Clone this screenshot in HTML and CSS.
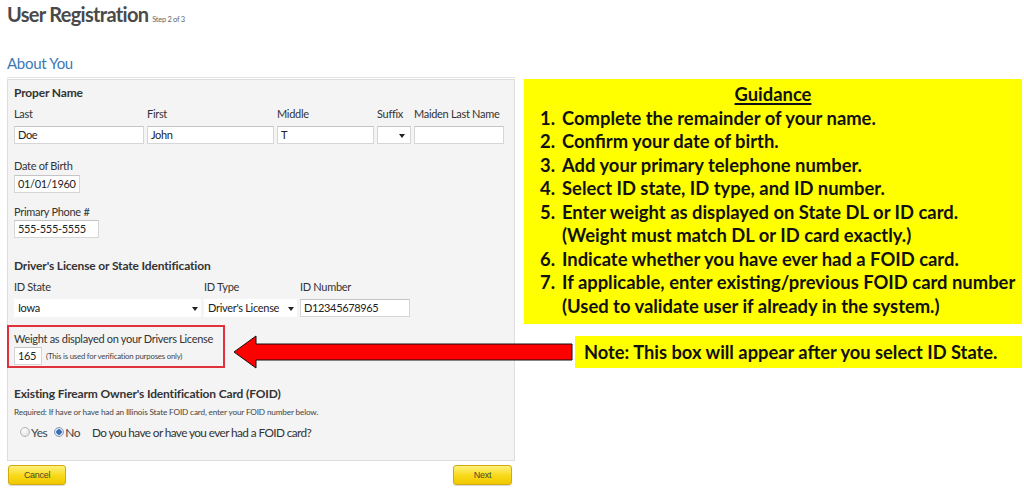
FILE: index.html
```html
<!DOCTYPE html>
<html>
<head>
<meta charset="utf-8">
<title>User Registration</title>
<link rel="stylesheet" href="styles.css">
</head>
<body>
<div class="page">
  <header class="title-bar">
    <h1 class="title">User Registration</h1>
    <span class="step">Step 2 of 3</span>
  </header>
  <h2 class="section">About You</h2>
  <div class="main">
    <div class="left">
      <div class="panel">
        <div class="group-title">Proper Name</div>
        <div class="name-grid">
          <label class="lbl">Last</label>
          <label class="lbl">First</label>
          <label class="lbl">Middle</label>
          <label class="lbl">Suffix</label>
          <label class="lbl">Maiden Last Name</label>
          <div class="input">Doe</div>
          <div class="input">John</div>
          <div class="input">T</div>
          <div class="input select-box"><span class="caret"></span></div>
          <div class="input"></div>
        </div>
        <div class="field dob">
          <label class="lbl">Date of Birth</label>
          <div class="input w-dob">01/01/1960</div>
        </div>
        <div class="field phone">
          <label class="lbl">Primary Phone #</label>
          <div class="input w-phone">555-555-5555</div>
        </div>
        <div class="group-title dl-title">Driver's License or State Identification</div>
        <div class="id-grid">
          <label class="lbl">ID State</label>
          <label class="lbl">ID Type</label>
          <label class="lbl">ID Number</label>
          <div class="select plain"><span class="sel-text">Iowa</span><span class="caret"></span></div>
          <div class="select plain"><span class="sel-text">Driver's License</span><span class="caret"></span></div>
          <div class="input">D12345678965</div>
        </div>
        <div class="weight-box">
          <div class="lbl weight-lbl">Weight as displayed on your Drivers License</div>
          <div class="weight-row">
            <div class="input w-weight">165</div>
            <span class="hint">(This is used for verification purposes only)</span>
          </div>
        </div>
        <div class="group-title foid-title">Existing Firearm Owner's Identification Card (FOID)</div>
        <div class="required">Required: If have or have had an Illinois State FOID card, enter your FOID number below.</div>
        <div class="radio-row">
          <span class="radio"></span><span class="radio-lbl">Yes</span>
          <span class="radio checked"></span><span class="radio-lbl">No</span>
          <span class="question">Do you have or have you ever had a FOID card?</span>
        </div>
      </div>
      <div class="buttons">
        <button class="btn btn-cancel">Cancel</button>
        <button class="btn btn-next">Next</button>
      </div>
    </div>
    <div class="right">
      <div class="guidance">
        <div class="g-title">Guidance</div>
        <ol class="g-list">
          <li><span class="num">1.</span><span class="txt">Complete the remainder of your name.</span></li>
          <li><span class="num">2.</span><span class="txt">Confirm your date of birth.</span></li>
          <li><span class="num">3.</span><span class="txt">Add your primary telephone number.</span></li>
          <li><span class="num">4.</span><span class="txt">Select ID state, ID type, and ID number.</span></li>
          <li><span class="num">5.</span><span class="txt">Enter weight as displayed on State DL or ID card.<br>(Weight must match DL or ID card exactly.)</span></li>
          <li><span class="num">6.</span><span class="txt">Indicate whether you have ever had a FOID card.</span></li>
          <li><span class="num">7.</span><span class="txt">If applicable, enter existing/previous FOID card number<br>(Used to validate user if already in the system.)</span></li>
        </ol>
      </div>
      <div class="note">Note: This box will appear after you select ID State.</div>
    </div>
  </div>
  <svg class="arrow" width="342" height="36" viewBox="0 0 342 36">
    <polygon points="2,18 24,2 24,10 340,10 340,26 24,26 24,34" fill="#ff0000" stroke="#111" stroke-width="1"/>
  </svg>
</div>
</body>
</html>
```

FILE: styles.css
```css
* { box-sizing: border-box; }
html, body { margin: 0; padding: 0; background: #ffffff; }
body {
  font-family: Lato, "Liberation Sans", sans-serif;
  color: #333;
}
.page {
  position: relative;
  width: 1024px;
  height: 500px;
  padding-left: 7px;
}
.title-bar {
  display: flex;
  align-items: baseline;
  gap: 4px;
  height: 50px;
  padding-top: 1px;
}
.title {
  margin: 0;
  font-size: 20px;
  line-height: 26px;
  font-weight: bold;
  color: #4a4a4a;
  letter-spacing: -0.7px;
}
.step {
  font-size: 7.5px;
  color: #666;
  letter-spacing: -0.3px;
}
.section {
  margin: 0;
  height: 28px;
  font-size: 15px;
  line-height: 26px;
  font-weight: normal;
  color: #3b78b8;
  border-bottom: 1px solid #e2e2e2;
  width: 508px;
  letter-spacing: -0.3px;
}
.main {
  display: flex;
  gap: 9px;
  margin-top: 1px;
}
.left { width: 508px; }
.panel {
  background: #f4f4f4;
  border: 1px solid #dedede;
  height: 382px;
  padding: 6px 7px 0 6px;
}
.group-title {
  font-size: 12px;
  line-height: 14px;
  font-weight: bold;
  color: #333;
  letter-spacing: -0.15px;
  white-space: nowrap;
}
.lbl {
  display: block;
  font-size: 11px;
  line-height: 14px;
  color: #333;
  letter-spacing: -0.3px;
  white-space: nowrap;
}
.input {
  height: 18px;
  background: #fff;
  border: 1px solid #d6d6d6;
  border-top-color: #c4c4c4;
  font-size: 11px;
  line-height: 16px;
  padding-left: 3px;
  color: #222;
  position: relative;
  letter-spacing: -0.35px;
  white-space: nowrap;
}
.name-grid {
  display: grid;
  grid-template-columns: 130px 127px 97px 34px 90px;
  column-gap: 3px;
  row-gap: 5px;
  margin-top: 7px;
}
.caret {
  position: absolute;
  top: 7px;
  right: 5px;
  width: 0;
  height: 0;
  border-left: 3px solid transparent;
  border-right: 3px solid transparent;
  border-top: 4px solid #222;
}
.field .lbl { margin-bottom: 2px; }
.dob { margin-top: 15px; }
.phone { margin-top: 12px; }
.phone .lbl { margin-bottom: 1px; }
.w-dob { width: 66px; }
.w-phone { width: 85px; }
.dl-title { margin-top: 21px; }
.id-grid {
  display: grid;
  grid-template-columns: 187px 93px 110px;
  column-gap: 3px;
  row-gap: 5px;
  margin-top: 7px;
}
.select {
  position: relative;
  height: 18px;
  background: #fff;
  font-size: 11px;
  line-height: 18px;
  padding-left: 4px;
  color: #222;
  letter-spacing: -0.3px;
  white-space: nowrap;
}
.select .caret { top: 8px; right: 3px; }
.weight-box {
  margin-top: 8px;
  margin-left: -7px;
  width: 218px;
  border: 2px solid #e0323c;
  padding: 5px 0 1px 5px;
}
.weight-lbl { margin-bottom: 1px; }
.weight-row {
  display: flex;
  align-items: center;
  gap: 4px;
}
.w-weight { width: 28px; }
.hint {
  font-size: 7.8px;
  color: #444;
  letter-spacing: -0.2px;
  white-space: nowrap;
}
.foid-title { margin-top: 19px; }
.required {
  margin-top: 6px;
  font-size: 8.2px;
  line-height: 10px;
  color: #444;
  letter-spacing: -0.15px;
  white-space: nowrap;
}
.radio-row {
  display: flex;
  align-items: center;
  margin-top: 7px;
  height: 16px;
  padding-left: 6px;
}
.radio {
  width: 10px;
  height: 10px;
  border-radius: 50%;
  border: 1px solid #b5b5b5;
  background: radial-gradient(circle at 40% 35%, #ffffff, #d8d8d8);
  margin-right: 1px;
  flex: none;
}
.radio.checked {
  background: radial-gradient(circle, #3d6fb8 0 2.5px, #dfe8f4 3px, #c8d4e4 100%);
  border-color: #8a9cb8;
  margin-left: 7px;
}
.radio-lbl {
  font-size: 12px;
  color: #444;
  letter-spacing: -0.5px;
}
.question {
  margin-left: 12px;
  font-size: 11.8px;
  color: #333;
  letter-spacing: -0.6px;
  white-space: nowrap;
}
.buttons {
  display: flex;
  justify-content: space-between;
  margin-top: 4px;
  padding: 0 3px 0 1px;
}
.btn {
  height: 20px;
  border: 1px solid #d2aa10;
  border-radius: 3px;
  background: linear-gradient(#fff07a, #f8d917 55%, #f0c800);
  font-family: "Liberation Sans", Arial, sans-serif;
  font-size: 9px;
  color: #4a4a2a;
  padding: 0;
  box-shadow: 0 1px 1px rgba(0,0,0,0.15);
  letter-spacing: -0.3px;
}
.btn-cancel { width: 58px; }
.btn-next { width: 59px; }
.right { width: 498px; }
.guidance {
  height: 245px;
  background: #ffff00;
  padding-top: 4px;
  font-family: Lato, "Open Sans", sans-serif;
  font-weight: bold;
  font-size: 18.4px;
  line-height: 23.5px;
  color: #111;
}
.g-title {
  text-align: center;
  text-decoration: underline;
  text-decoration-thickness: 1.5px;
  text-underline-offset: 2px;
}
.g-list {
  list-style: none;
  margin: 0;
  padding: 0 0 0 16px;
}
.g-list li { display: flex; }
.num { width: 22px; flex: none; }
.note {
  margin-top: 12px;
  margin-left: 51px;
  height: 32px;
  background: #ffff00;
  font-family: Lato, "Open Sans", sans-serif;
  font-weight: bold;
  font-size: 18.3px;
  line-height: 32px;
  padding-left: 9px;
  color: #111;
}
.arrow {
  position: absolute;
  left: 232px;
  top: 334px;
}
```
